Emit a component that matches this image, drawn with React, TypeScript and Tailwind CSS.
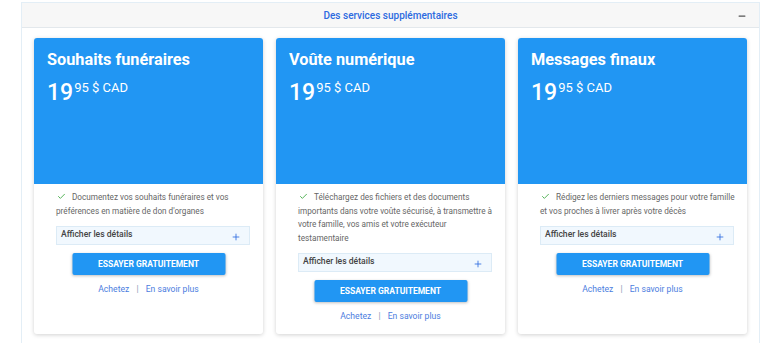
import { Plus, Minus, Check } from "lucide-react";

const services = [
  {
    title: "Souhaits funéraires",
    text: "Documentez vos souhaits funéraires et vos préférences en matière de don d'organes",
  },
  {
    title: "Voûte numérique",
    text: "Téléchargez des fichiers et des documents importants dans votre voûte sécurisé, à transmettre à votre famille, vos amis et votre exécuteur testamentaire",
  },
  {
    title: "Messages finaux",
    text: "Rédigez les derniers messages pour votre famille et vos proches à livrer après votre décès",
  },
];

const ServiceCard = ({ title, text }: { title: string; text: string }) => {
  return (
    <div className="flex flex-col bg-white rounded-[3px] shadow-[0_1px_4px_rgba(0,0,0,0.18)] overflow-hidden">
      <div className="shrink-0 h-[146px] bg-[#2196f3] px-[13px] pt-[10px] text-white">
        <h3 className="text-[16.3px] font-bold leading-[24px]">{title}</h3>
        <div className="mt-[8px] flex items-start">
          <span className="text-[23px] font-medium leading-[26px]">19</span>
          <span className="text-[13px] leading-[16px] ml-[1px]">95 $ CAD</span>
        </div>
      </div>
      <div className="pl-[22px] pr-[13px] pt-[7px] pb-[24px] flex flex-col">
        <p className="text-[8.2px] leading-[13.5px] text-[#666] -mr-[3px]">
          <Check className="inline w-[9px] h-[9px] text-[#4caf50] mr-[6px] -mt-[2px] ml-[1px]" strokeWidth={2.5} />
          {text}
        </p>
        <div className="mt-[8px] h-[19px] bg-[#f1f8fe] border border-[#dcebf6] flex items-center justify-between pl-[4px] pr-[8px]">
          <span className="text-[8.6px] font-medium text-[#444] -mt-[3px]">Afficher les détails</span>
          <Plus className="w-[10px] h-[10px] text-[#2d6be0] mt-[3px]" strokeWidth={2} />
        </div>
        <button className="mt-[8px] mx-auto w-[153px] h-[22px] bg-[#2196f3] text-white text-[8.5px] font-bold rounded-[2px] shadow-[0_1px_3px_rgba(0,0,0,0.25)] -translate-x-[4.5px]">
          ESSAYER GRATUITEMENT
        </button>
        <div className="mt-[8px] text-center text-[8.6px] text-[#4c7de0] -translate-x-[4.5px]">
          Achetez <span className="mx-[5px] text-[#8a9bb8]">|</span> En savoir plus
        </div>
      </div>
    </div>
  );
};

export default function App() {
  return (
    <div className="w-[768px] h-[343px] bg-white overflow-hidden font-['Roboto',sans-serif]">
      <div className="ml-[21px] w-[739px] mt-[2px] h-[360px] border border-[#e3eef6] bg-white">
        <div className="h-[25px] bg-[#f7f7f7] border-b border-[#e3e8ec] flex items-center justify-center relative">
          <span className="text-[10px] font-medium text-[#2d6be0]">Des services supplémentaires</span>
          <Minus className="absolute right-[12px] top-[8px] w-[10px] h-[10px] text-[#555]" strokeWidth={3} />
        </div>
        <div className="px-[12px] pt-[10px] grid grid-cols-3 gap-[13px] items-stretch h-[306px]">
          {services.map((s) => (
            <ServiceCard key={s.title} title={s.title} text={s.text} />
          ))}
        </div>
      </div>
    </div>
  );
}
